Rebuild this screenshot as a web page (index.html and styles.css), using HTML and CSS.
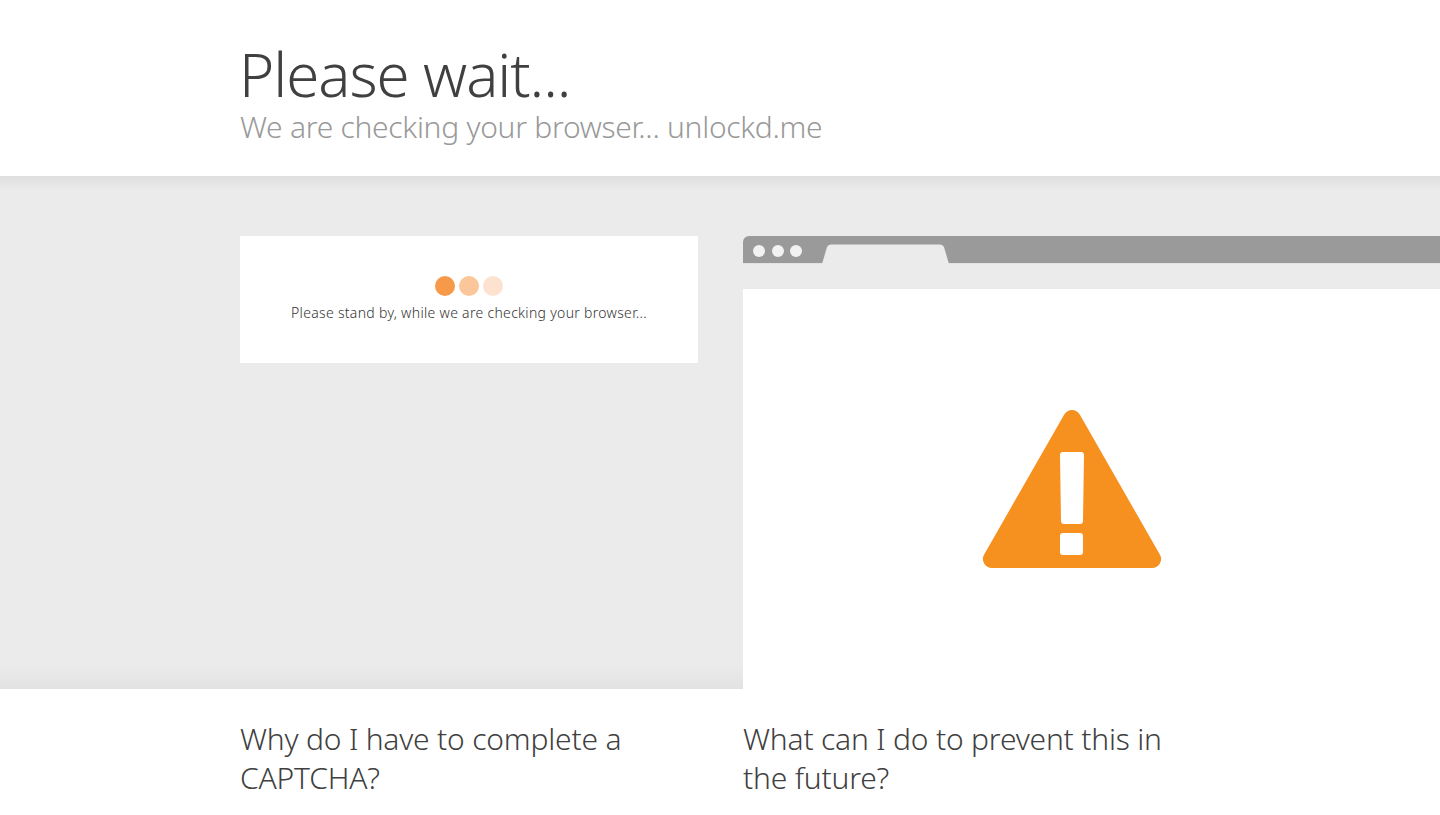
FILE: index.html
```html
<!DOCTYPE html>
<html lang="en">
<head>
<meta charset="utf-8">
<title>Please wait...</title>
<link rel="stylesheet" href="styles.css">
</head>
<body>
<header class="header">
  <div class="wrap">
    <h1 class="title">Please wait...</h1>
    <h2 class="subtitle">We are checking your browser... unlockd.me</h2>
  </div>
</header>
<main class="band">
  <div class="band-inner">
    <div class="card">
      <div class="dots">
        <span class="dot dot-a"></span>
        <span class="dot dot-b"></span>
        <span class="dot dot-c"></span>
      </div>
      <p class="card-text">Please stand by, while we are checking your browser...</p>
    </div>
    <div class="browser">
      <div class="browser-bar">
        <span class="light"></span>
        <span class="light"></span>
        <span class="light"></span>
        <svg class="tab" width="128" height="20" viewBox="0 0 128 20" aria-hidden="true">
          <path d="M0 20 L5 3 Q6 0.500 9 0.500 L118 0.500 Q121 0.500 122 3 L127 20 Z" fill="#ebebeb"/>
        </svg>
      </div>
      <div class="browser-address"></div>
      <div class="browser-body">
        <svg class="warning" width="180" height="160" viewBox="0 0 180 160" aria-hidden="true">
          <path fill="#f6901f" fill-rule="evenodd" d="M82.250 5.500 A9 9 0 0 1 97.750 5.500 L177.850 145.500 A9 9 0 0 1 170 159 L10 159 A9 9 0 0 1 2.150 145.500 Z M78 46 L79 112 Q79 115 82 115 L98 115 Q101 115 101 112 L102 46 Q102 43 99 43 L81 43 Q78 43 78 46 Z M78 127 L78 143 Q78 146 81 146 L98 146 Q101 146 101 143 L101 127 Q101 124 98 124 L81 124 Q78 124 78 127 Z"/>
        </svg>
      </div>
    </div>
  </div>
</main>
<section class="faq">
  <h2 class="faq-title">Why do I have to complete a CAPTCHA?</h2>
  <h2 class="faq-title">What can I do to prevent this in the future?</h2>
</section>
</body>
</html>
```

FILE: styles.css
```css
* {
  box-sizing: border-box;
}

html,
body {
  margin: 0;
  height: 815px;
  overflow: hidden;
  background: #fff;
  font-family: "Noto Sans", "Open Sans", sans-serif;
}

.header {
  height: 176px;
  padding-top: 38px;
}

.wrap {
  padding-left: 240px;
}

.title {
  margin: 0 0 0 -1px;
  font-size: 60px;
  line-height: 72px;
  font-weight: 350;
  color: #404040;
  letter-spacing: -1.05px;
}

.subtitle {
  margin: -1px 0 0;
  font-size: 30px;
  line-height: 36px;
  font-weight: 350;
  color: #999;
  letter-spacing: -0.28px;
}

.band {
  height: 513px;
  background: linear-gradient(#dedede 0, #ebebeb 14px, #ebebeb 490px, #e2e2e2 513px);
  padding: 60px 0 0 240px;
}

.band-inner {
  display: flex;
  gap: 45px;
  align-items: flex-start;
  height: 453px;
}

.card {
  width: 458px;
  height: 127px;
  background: #fff;
  padding-top: 40px;
  text-align: center;
}

.dots {
  display: flex;
  justify-content: center;
  gap: 4px;
  height: 20px;
}

.dot {
  width: 20px;
  height: 20px;
  border-radius: 50%;
}

.dot-a {
  background: #f69a4a;
}

.dot-b {
  background: #fbc69a;
}

.dot-c {
  background: #fde3cf;
}

.card-text {
  margin: 7px 0 0;
  font-size: 14px;
  line-height: 20px;
  font-weight: 350;
  color: #333;
  letter-spacing: 0.31px;
}

.browser {
  flex: 1;
  height: 453px;
  display: flex;
  flex-direction: column;
}

.browser-bar {
  height: 28px;
  background: #9a9a9a;
  border-radius: 6px 0 0 0;
  display: flex;
  align-items: flex-start;
  gap: 6.5px;
  padding: 9px 0 0 10px;
  border-bottom: 1px solid #e2e2e2;
}

.light {
  width: 12px;
  height: 12px;
  border-radius: 50%;
  background: #f2f2f2;
  flex: none;
}

.tab {
  margin: -1px 0 0 13px;
  flex: none;
}

.browser-address {
  height: 25px;
  background: #ebebeb;
}

.browser-body {
  flex: 1;
  background: #fff;
  padding: 120px 0 0 239px;
}

.warning {
  display: block;
}

.faq {
  display: grid;
  grid-template-columns: 458px 458px;
  column-gap: 45px;
  padding: 30px 0 0 240px;
}

.faq-title {
  margin: 0;
  font-size: 30px;
  line-height: 39px;
  font-weight: 350;
  color: #404040;
  letter-spacing: -0.19px;
}
```
